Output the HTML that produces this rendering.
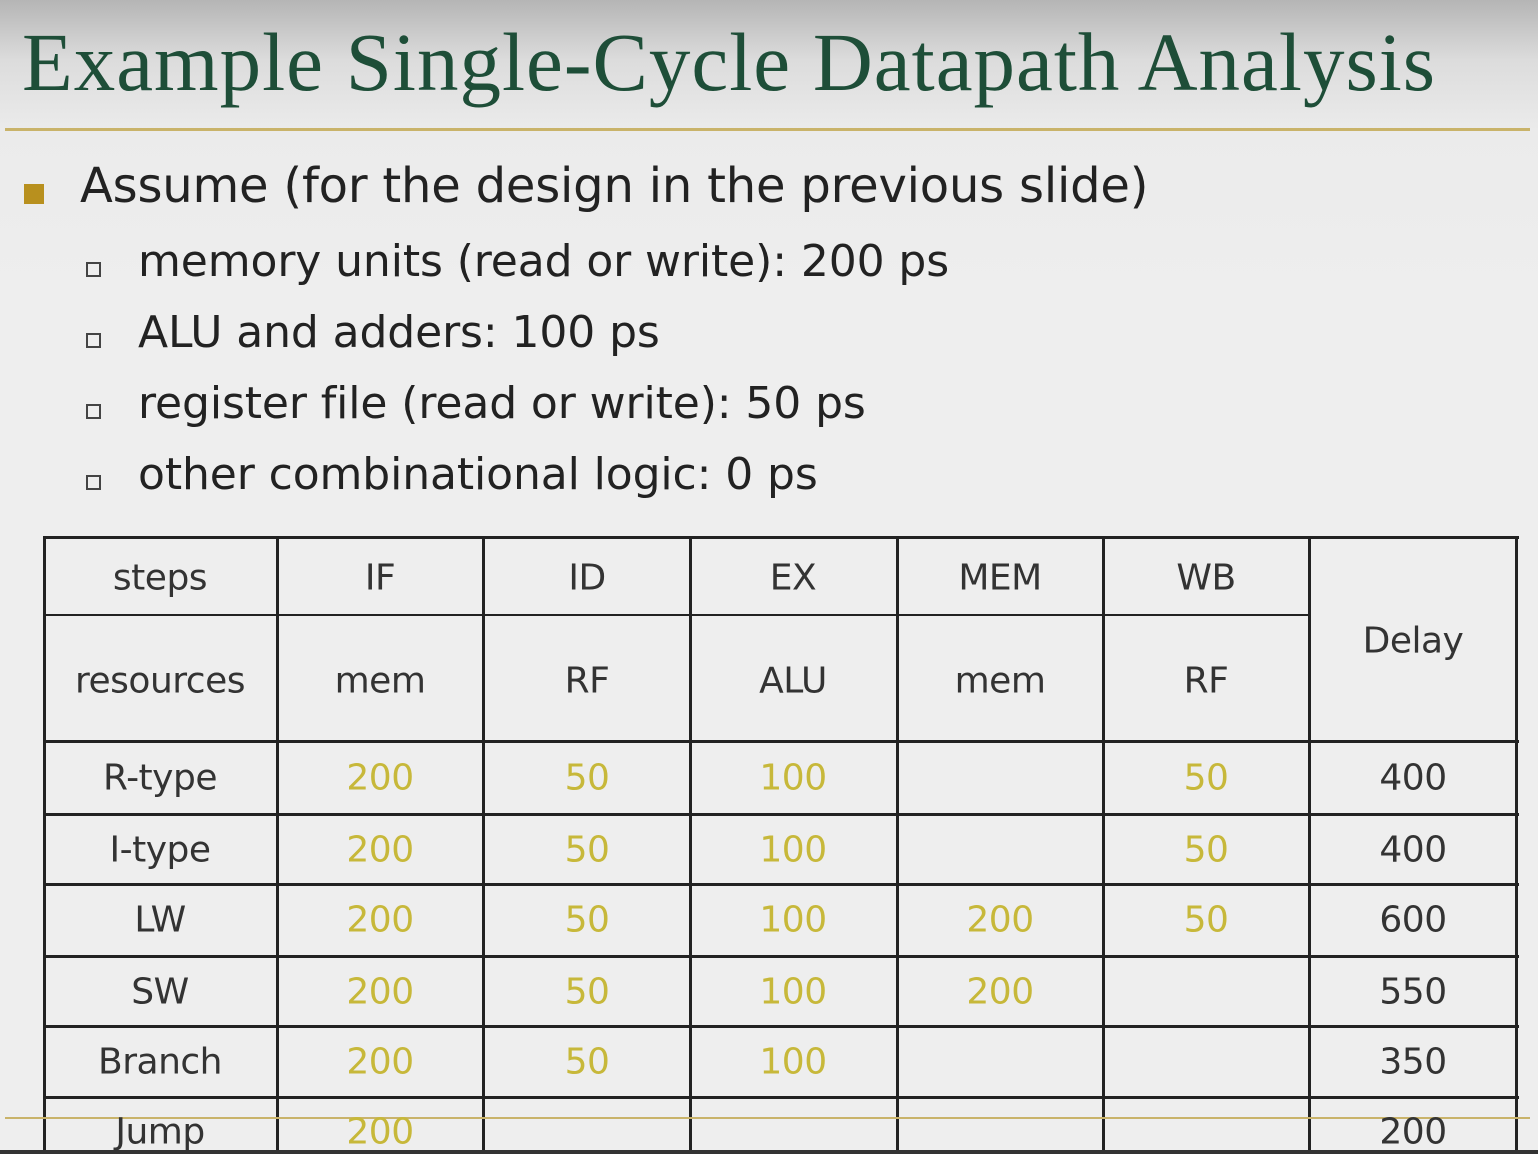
<!DOCTYPE html><html><head><style>
body{margin:0;width:1538px;height:1154px;overflow:hidden;position:relative;background:linear-gradient(#b5b5b5 0px,#dcdcdc 60px,#ebebeb 130px,#eeeeee 300px);font-family:"DejaVu Sans","Liberation Sans",sans-serif}
.a{position:absolute;white-space:nowrap}
.h{position:absolute;background:#222;height:3px}
.v{position:absolute;background:#222;width:3px}
.c{position:absolute;transform:translate(-50%,-50%);font-size:36px;color:#333;white-space:nowrap;letter-spacing:-0.5px}
.y{color:#c7b83a}
.sb{position:absolute;width:11px;height:11px;border:2px solid #444;left:86px}
.s{position:absolute;left:138px;font-size:44px;color:#222;letter-spacing:-0.1px;white-space:nowrap}
</style></head><body>
<div class="a" style="left:22px;top:14px;font-family:'Liberation Serif',serif;font-size:83px;letter-spacing:1px;color:#1e4e38">Example Single-Cycle Datapath Analysis</div>
<div class="a" style="left:5px;top:128px;width:1525px;height:3px;background:#c9b36a"></div>
<div class="a" style="left:24px;top:184px;width:20px;height:20px;background:#b8901e"></div>
<div class="a" style="left:80px;top:158px;font-size:48px;color:#222;letter-spacing:-0.2px">Assume (for the design in the previous slide)</div>
<div class="sb" style="top:262px"></div><div class="s" style="top:236px">memory units (read or write): 200 ps</div>
<div class="sb" style="top:333px"></div><div class="s" style="top:307px">ALU and adders: 100 ps</div>
<div class="sb" style="top:404px"></div><div class="s" style="top:378px">register file (read or write): 50 ps</div>
<div class="sb" style="top:475px"></div><div class="s" style="top:449px">other combinational logic: 0 ps</div>

<div class="h" style="left:43px;top:536px;width:1476px"></div>
<div class="h" style="left:43px;top:614px;width:1268px;height:2px"></div>
<div class="h" style="left:43px;top:740px;width:1476px"></div>
<div class="h" style="left:43px;top:813px;width:1476px"></div>
<div class="h" style="left:43px;top:883px;width:1476px"></div>
<div class="h" style="left:43px;top:955px;width:1476px"></div>
<div class="h" style="left:43px;top:1025px;width:1476px"></div>
<div class="h" style="left:43px;top:1096px;width:1476px"></div>
<div class="v" style="left:43px;top:536px;height:618px"></div>
<div class="v" style="left:276px;top:536px;height:618px"></div>
<div class="v" style="left:482px;top:536px;height:618px"></div>
<div class="v" style="left:689px;top:536px;height:618px"></div>
<div class="v" style="left:896px;top:536px;height:618px"></div>
<div class="v" style="left:1102px;top:536px;height:618px"></div>
<div class="v" style="left:1308px;top:536px;height:618px"></div>
<div class="v" style="left:1515px;top:536px;height:618px"></div>
<div class="a" style="left:5px;top:1117px;width:1525px;height:2px;background:#c9b36a"></div>
<div class="a" style="left:0;top:1150px;width:1538px;height:4px;background:#333"></div>

<div class="c" style="left:160px;top:578px">steps</div><div class="c" style="left:380px;top:578px">IF</div><div class="c" style="left:587px;top:578px">ID</div><div class="c" style="left:793px;top:578px">EX</div><div class="c" style="left:1000px;top:578px">MEM</div><div class="c" style="left:1206px;top:578px">WB</div>
<div class="c" style="left:160px;top:681px">resources</div><div class="c" style="left:380px;top:681px">mem</div><div class="c" style="left:587px;top:681px">RF</div><div class="c" style="left:793px;top:681px">ALU</div><div class="c" style="left:1000px;top:681px">mem</div><div class="c" style="left:1206px;top:681px">RF</div>
<div class="c" style="left:1413px;top:641px">Delay</div>

<div class="c" style="left:160px;top:778px">R-type</div><div class="c y" style="left:380px;top:778px">200</div><div class="c y" style="left:587px;top:778px">50</div><div class="c y" style="left:793px;top:778px">100</div><div class="c y" style="left:1206px;top:778px">50</div><div class="c" style="left:1413px;top:778px">400</div>
<div class="c" style="left:160px;top:850px">I-type</div><div class="c y" style="left:380px;top:850px">200</div><div class="c y" style="left:587px;top:850px">50</div><div class="c y" style="left:793px;top:850px">100</div><div class="c y" style="left:1206px;top:850px">50</div><div class="c" style="left:1413px;top:850px">400</div>
<div class="c" style="left:160px;top:920px">LW</div><div class="c y" style="left:380px;top:920px">200</div><div class="c y" style="left:587px;top:920px">50</div><div class="c y" style="left:793px;top:920px">100</div><div class="c y" style="left:1000px;top:920px">200</div><div class="c y" style="left:1206px;top:920px">50</div><div class="c" style="left:1413px;top:920px">600</div>
<div class="c" style="left:160px;top:992px">SW</div><div class="c y" style="left:380px;top:992px">200</div><div class="c y" style="left:587px;top:992px">50</div><div class="c y" style="left:793px;top:992px">100</div><div class="c y" style="left:1000px;top:992px">200</div><div class="c" style="left:1413px;top:992px">550</div>
<div class="c" style="left:160px;top:1062px">Branch</div><div class="c y" style="left:380px;top:1062px">200</div><div class="c y" style="left:587px;top:1062px">50</div><div class="c y" style="left:793px;top:1062px">100</div><div class="c" style="left:1413px;top:1062px">350</div>
<div class="c" style="left:160px;top:1132px">Jump</div><div class="c y" style="left:380px;top:1132px">200</div><div class="c" style="left:1413px;top:1132px">200</div>
</body></html>
